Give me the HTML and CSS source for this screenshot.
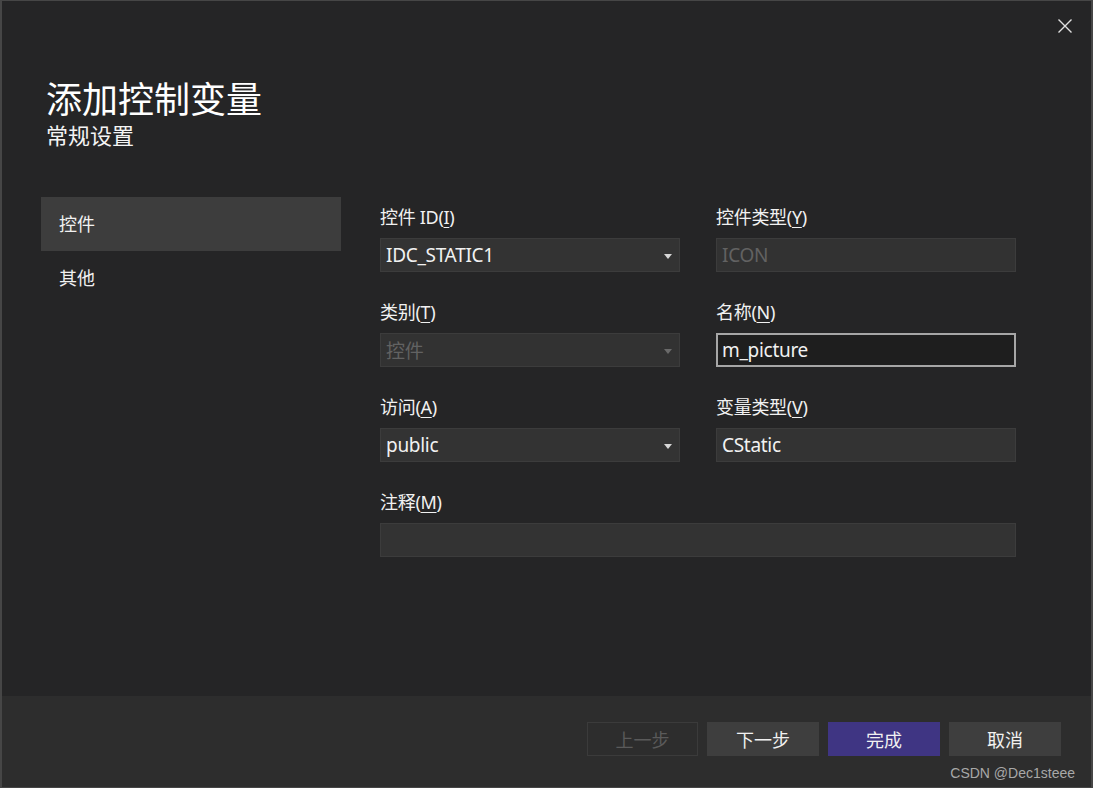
FILE: index.html
```html
<!DOCTYPE html>
<html lang="zh-CN">
<head>
<meta charset="utf-8">
<title>添加控制变量</title>
<link rel="stylesheet" href="styles.css">
</head>
<body>
<div class="window">
  <button class="close" aria-label="关闭">
    <svg width="16" height="16" viewBox="0 0 16 16"><path d="M1.5 1.5 L14.5 14.5 M14.5 1.5 L1.5 14.5" stroke="#e0e0e0" stroke-width="1.4" fill="none"/></svg>
  </button>
  <div class="main">
    <header class="header">
      <h1 class="title">添加控制变量</h1>
      <div class="subtitle">常规设置</div>
    </header>
    <div class="content">
      <nav class="nav">
        <div class="nav-item active">控件</div>
        <div class="nav-item">其他</div>
      </nav>
      <div class="form">
        <div class="group">
          <div class="label">控件 ID(<u>I</u>)</div>
          <div class="field select"><span>IDC_STATIC1</span><i class="arrow"></i></div>
        </div>
        <div class="group">
          <div class="label">控件类型(<u>Y</u>)</div>
          <div class="field disabled"><span>ICON</span></div>
        </div>
        <div class="group">
          <div class="label">类别(<u>T</u>)</div>
          <div class="field select disabled"><span>控件</span><i class="arrow dim"></i></div>
        </div>
        <div class="group">
          <div class="label">名称(<u>N</u>)</div>
          <div class="field focused"><span>m_picture</span></div>
        </div>
        <div class="group">
          <div class="label">访问(<u>A</u>)</div>
          <div class="field select"><span>public</span><i class="arrow"></i></div>
        </div>
        <div class="group">
          <div class="label">变量类型(<u>V</u>)</div>
          <div class="field"><span>CStatic</span></div>
        </div>
        <div class="group wide">
          <div class="label">注释(<u>M</u>)</div>
          <div class="field"><span></span></div>
        </div>
      </div>
    </div>
  </div>
  <footer class="footer">
    <button class="btn disabled">上一步</button>
    <button class="btn">下一步</button>
    <button class="btn primary">完成</button>
    <button class="btn">取消</button>
  </footer>
  <div class="watermark">CSDN @Dec1steee</div>
</div>
</body>
</html>
```
FILE: styles.css
```css
* { box-sizing: border-box; }
html, body { margin: 0; padding: 0; }
body {
  width: 1093px;
  height: 788px;
  background: #3a3a3a;
  font-family: "Noto Sans", "Noto Sans CJK SC", sans-serif;
  color: #f1f1f1;
  overflow: hidden;
}
.window {
  position: relative;
  width: 1093px;
  height: 788px;
  border: 1px solid #464646;
  border-left-width: 2px;
  border-right-width: 2px;
  background: #252526;
  display: flex;
  flex-direction: column;
}
.close {
  position: absolute;
  top: 17px;
  right: 18px;
  width: 16px;
  height: 16px;
  padding: 0;
  border: 0;
  background: transparent;
  display: flex;
}
.main {
  flex: 1;
  display: flex;
  flex-direction: column;
  padding-top: 76px;
}
.header {
  padding-left: 44px;
}
.title {
  margin: 0;
  font-family: "Noto Sans CJK SC", sans-serif;
  font-weight: 400;
  font-size: 36px;
  line-height: 40px;
  color: #ffffff;
}
.subtitle {
  margin-top: 3px;
  font-family: "Noto Sans CJK SC", sans-serif;
  font-size: 22px;
  line-height: 28px;
  color: #f4f4f4;
}
.content {
  display: flex;
  margin-top: 49px;
  padding-left: 39px;
}
.nav {
  width: 300px;
  display: flex;
  flex-direction: column;
}
.nav-item {
  height: 54px;
  line-height: 52px;
  padding-left: 18px;
  font-family: "Noto Sans CJK SC", sans-serif;
  font-size: 18px;
  color: #f1f1f1;
}
.nav-item.active {
  background: #3d3d3d;
}
.form {
  margin-left: 39px;
  padding-top: 8px;
  display: grid;
  grid-template-columns: 300px 300px;
  column-gap: 36px;
  row-gap: 28px;
  align-content: start;
}
.group.wide {
  grid-column: 1 / 3;
}
.label {
  height: 24px;
  line-height: 24px;
  margin-bottom: 9px;
  font-size: 18px;
  color: #f1f1f1;
  letter-spacing: -0.3px;
}
.label u {
  text-underline-offset: 3px;
  text-decoration-thickness: 1px;
}
.field {
  height: 34px;
  background: #333333;
  border: 1px solid #3c3c3c;
  display: flex;
  align-items: center;
  padding-left: 5px;
  padding-right: 7px;
  font-size: 19px;
  color: #f1f1f1;
  letter-spacing: -0.3px;
}
.field span { flex: 1; }
.field.disabled {
  color: #626262;
  background: #323232;
}
.field.focused {
  background: #1e1e1e;
  border: 2px solid #a6a6a6;
  padding-left: 4px;
}
.arrow {
  width: 0;
  height: 0;
  border-left: 4.5px solid transparent;
  border-right: 4.5px solid transparent;
  border-top: 5px solid #d6d6d6;
  margin-top: 2px;
}
.arrow.dim { border-top-color: #6a6a6a; }
.footer {
  height: 91px;
  background: #2d2d2d;
  display: flex;
  justify-content: flex-end;
  align-items: flex-start;
  gap: 9px;
  padding-top: 26px;
  padding-right: 30px;
}
.btn {
  width: 112px;
  height: 34px;
  border: 1px solid transparent;
  background: #3e3e3e;
  color: #f1f1f1;
  font-family: "Noto Sans CJK SC", sans-serif;
  font-size: 18px;
  line-height: 30px;
  padding: 0;
}
.btn.disabled {
  width: 111px;
  background: #2d2d2d;
  border-color: #3b3b3b;
  color: #5a5a5a;
}
.btn.primary {
  background: #3f3583;
  color: #f1f1f1;
}
.watermark {
  position: absolute;
  right: 16px;
  bottom: 6px;
  font-family: "Liberation Sans", sans-serif;
  font-size: 14px;
  color: #a8a8a8;
}
```
